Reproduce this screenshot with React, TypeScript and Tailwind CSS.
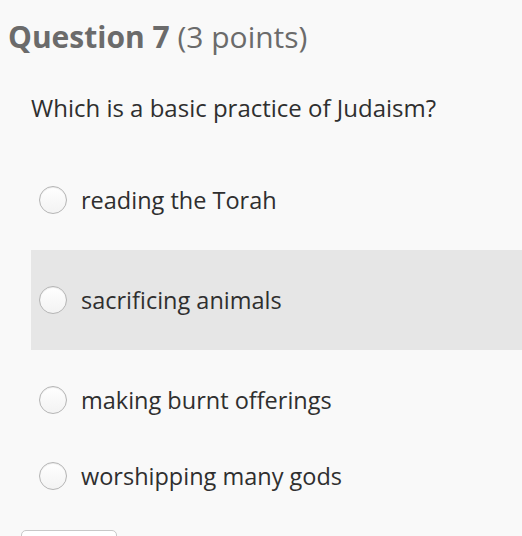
import React from "react";

const options = [
  { label: "reading the Torah", h: "h-[100px]", hl: false },
  { label: "sacrificing animals", h: "h-[100px]", hl: true },
  { label: "making burnt offerings", h: "h-[100px]", hl: false },
  { label: "worshipping many gods", h: "h-[52px]", hl: false },
];

function Radio() {
  return (
    <span className="block w-[28px] h-[28px] rounded-full border border-[#b5b5b5] bg-gradient-to-b from-white to-[#f3f3f3] shadow-[inset_0_1px_1px_rgba(0,0,0,0.08)] shrink-0" />
  );
}

export default function App() {
  return (
    <div
      className="w-[522px] h-[536px] bg-[#f9f9f9] overflow-hidden"
      style={{ fontFamily: "'Open Sans', sans-serif" }}
    >
      <div className="pl-[8px] pt-[17px] h-[80px] text-[30px] leading-[40px] text-[#6b6b6b]">
        <span className="font-bold">Question 7</span> <span>(3 points)</span>
      </div>
      <div className="pl-[31px] h-[70px] pt-[11px] text-[24px] leading-[34px] text-[#2f2f2f]">
        Which is a basic practice of Judaism?
      </div>
      <div className="pl-[31px]">
        {options.map((o) => (
          <div
            key={o.label}
            className={`flex items-center gap-[14px] pl-[8px] ${o.h} ${o.hl ? "bg-[#e6e6e6]" : ""}`}
          >
            <Radio />
            <span className="text-[23.5px] leading-[30px] text-[#2f2f2f]">{o.label}</span>
          </div>
        ))}
      </div>
      <div className="pl-[21px] pt-[28px]">
        <div className="w-[96px] h-[30px] rounded-[5px] border border-[#c8c8c8] bg-white" />
      </div>
    </div>
  );
}
